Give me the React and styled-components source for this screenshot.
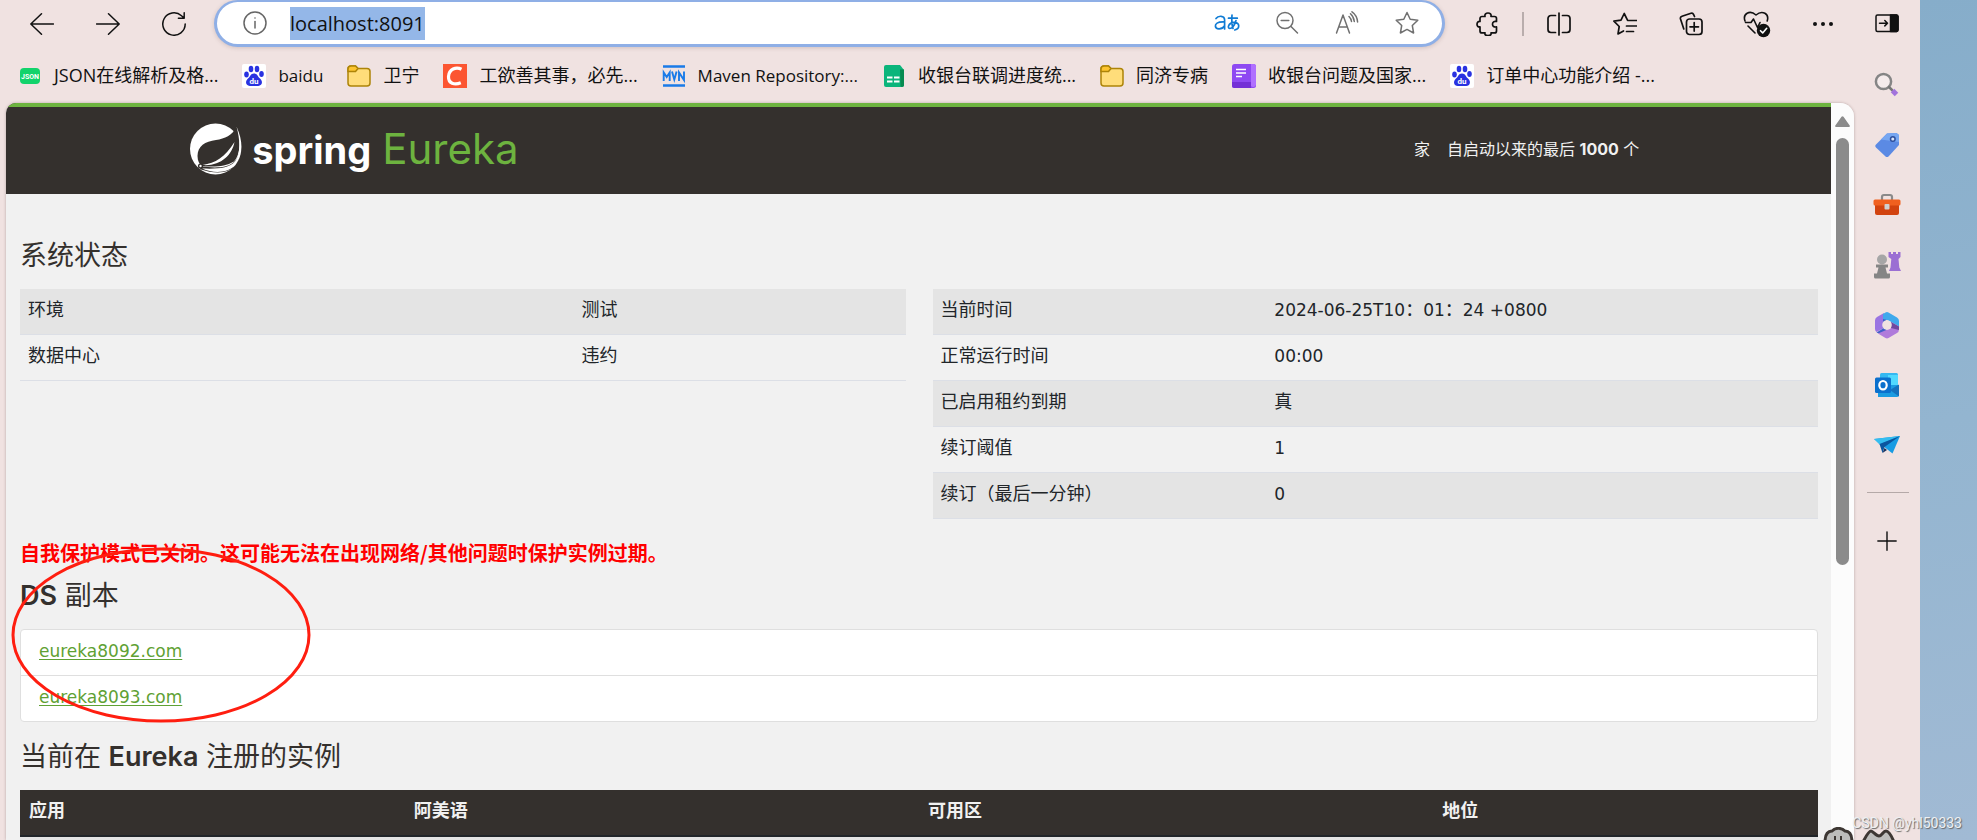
import React from "react";
import styled, { createGlobalStyle } from "styled-components";

const cjk = `"Noto Sans CJK SC", sans-serif`;

const GlobalStyle = createGlobalStyle`
  *, *::before, *::after { box-sizing: border-box; }
  body {
    margin: 0;
    background: #f0e2e1;
    color: #212529;
    font: 18px/27px "DejaVu Sans", ${cjk};
  }
  button { font: inherit; color: inherit; }
  svg { display: block; flex: none; }
`;

/* ---------- window ---------- */

const Screen = styled.div`
  position: relative;
  display: flex;
  height: 100vh;
  overflow: hidden;
`;

const Main = styled.div`
  flex: 1;
  min-width: 0;
  display: flex;
  flex-direction: column;
`;

const Desktop = styled.div`
  width: 57px;
  background: linear-gradient(170deg, #86adca, #93b5d0 50%, #a1bad4);
`;

const Toolbar = styled.div`
  display: flex;
  align-items: center;
  height: 47px;
  padding-left: 9px;
`;

const ToolButton = styled.button`
  display: flex;
  align-items: center;
  justify-content: center;
  flex: none;
  width: ${(p) => p.$width || 66}px;
  height: ${(p) => p.$height || 46}px;
  padding: 0;
  border: 0;
  background: none;
  color: ${(p) => p.$color || "#111"};
`;

const Divider = styled.span`
  width: 2px;
  height: 24px;
  margin: 0 2px 0 1px;
  background: #b9adac;
`;

const AddressBar = styled.div`
  display: flex;
  align-items: center;
  flex: 1;
  height: 47px;
  margin: 0 10px 0 7px;
  padding: 0 5px;
  border: 3px solid #8fafe6;
  border-top-width: 2px;
  border-radius: 24px;
  background: #fff;
  box-shadow: 0 1px 4px rgba(90, 60, 60, 0.2);
`;

const AddressSpace = styled.label`
  flex: 1;
  display: flex;
  padding-left: 2px;
`;

const AddressInput = styled.input`
  field-sizing: content;
  height: 33px;
  padding: 0;
  border: 0;
  outline: 0;
  background: #94b7e8;
  color: #111;
  font: 20px/33px "Open Sans", ${cjk};
`;

const Bookmarks = styled.nav`
  display: flex;
  align-items: center;
  gap: 24px;
  height: 56px;
  padding: 1px 0 0 18px;
`;

const Bookmark = styled.a`
  display: flex;
  align-items: center;
  gap: 12px;
  color: #111;
  font-family: "Open Sans", ${cjk};
  font-size: ${(p) => (p.$latin ? 17 : 18)}px;
  text-decoration: none;
  white-space: nowrap;
`;

const Sidebar = styled.aside`
  display: flex;
  flex-direction: column;
  width: 64px;
`;

const SideApps = styled.div`
  margin-top: 9px;
`;

const SideLine = styled.hr`
  width: 42px;
  height: 1px;
  margin: 17px auto 18px;
  border: 0;
  background: #b5a9a8;
`;

/* ---------- page ---------- */

const Viewport = styled.div`
  display: flex;
  flex: 1;
  min-height: 0;
  margin: 0 2px 0 6px;
  overflow: hidden;
  border-radius: 10px 14px 0 0;
  background: #f1f1f1;
  box-shadow: 0 0 3px rgba(80, 50, 50, 0.35);
`;

const Page = styled.div`
  flex: 1;
  min-width: 0;
`;

const Scrollbar = styled.div`
  display: flex;
  flex-direction: column;
  align-items: center;
  gap: 11px;
  width: 23px;
  padding-top: 13px;
  background: #fcfcfc;
`;

const Thumb = styled.div`
  width: 13px;
  height: 59%;
  border-radius: 7px;
  background: #8b8b8b;
`;

const PageHeader = styled.header`
  display: flex;
  align-items: center;
  justify-content: space-between;
  height: 91px;
  padding: 0 10.5% 3px 10.1%;
  border-top: 4px solid #6db33f;
  background: #34302d;
`;

const Brand = styled.a`
  display: flex;
  align-items: center;
  gap: 10px;
  color: #fff;
  font: 700 38px/48px Inter, sans-serif;
  text-decoration: none;
`;

const BrandText = styled.span`
  display: flex;
  align-items: baseline;
  gap: 11px;
`;

const BrandName = styled.span`
  color: #6db33f;
  font-size: 42px;
  font-weight: 400;
`;

const PageNav = styled.nav`
  display: flex;
  gap: 17px;
`;

const PageLink = styled.a`
  color: #f1f1f1;
  font: 400 16px/24px Inter, ${cjk};
  text-decoration: none;

  b { font-weight: 700; }
`;

const Content = styled.main`
  padding: 46px 13px 0 14px;
`;

const Heading = styled.h1`
  margin: 0 0 17px;
  color: #34302d;
  font: 400 27px/32px Inter, ${cjk};

  b { font-weight: 600; }
`;

const Columns = styled.div`
  display: flex;
  align-items: flex-start;
  gap: 27px;
`;

const StatusTable = styled.table`
  flex: 1;
  table-layout: fixed;
  border-spacing: 0;
  width: 0;

  th { width: ${(p) => p.$label}; font-weight: 400; text-align: left; }
`;

const StatusRow = styled.tr`
  &:nth-child(odd) { background: #e4e4e4; }

  th, td {
    height: 46px;
    padding: 7px 8px 11px;
    border-bottom: 1px solid #dcdfe6;
  }
`;

const Latin = styled.span`
  font-size: 17px;
  line-height: 20px;
`;

const Warning = styled.p`
  margin: 19px 0 12px;
  color: #f00;
  font: 700 20px/30px ${cjk};
`;

const Replicas = styled.section`
  position: relative;
  margin-bottom: 19px;
`;

const ReplicaList = styled.ul`
  margin: 0;
  padding: 0;
  border: 1px solid #dfdfdf;
  border-radius: 4px;
  background: #fff;
  list-style: none;
`;

const Replica = styled.li`
  padding: 7px 18px 11px;

  & + & { border-top: 1px solid #dfdfdf; }
  a {
    color: #5fa134;
    font-size: 17px;
    line-height: 20px;
    text-underline-offset: 2px;
  }
`;

const Marker = styled.svg`
  position: absolute;
  top: -34px;
  left: -10px;
  pointer-events: none;
`;

const InstanceTable = styled.table`
  width: 100%;
  table-layout: fixed;
  border-spacing: 0;

  th {
    width: 28.6%;
    height: 47px;
    padding: 7px 9px 11px;
    border-bottom: 2px solid #212529;
    background: #34302d;
    color: #f1f1f1;
    font-weight: 700;
    text-align: left;
  }
  th:first-child { width: 21.4%; }
  th:last-child { width: auto; }
  td { height: 46px; background: #e4e4e4; }
`;

const Watermark = styled.div`
  position: absolute;
  right: 15px;
  bottom: 7px;
  color: #eef0f2;
  font: 14px/20px Roboto, sans-serif;
  text-shadow: 1px 1px 1px #666;
`;

const Stickers = styled.svg`
  position: absolute;
  right: 78px;
  bottom: 0;
`;

/* ---------- icons ---------- */

function Icon({ size = 24, sw = 1.5, children, ...rest }) {
  return (
    <svg width={size} height={size} viewBox="0 0 24 24" fill="none" stroke="currentColor"
      strokeWidth={sw} strokeLinecap="round" strokeLinejoin="round" aria-hidden="true" {...rest}>
      {children}
    </svg>
  );
}

const star = "M12 1.5 15.2 8.2 22.8 9.2 17.3 14.5 18.6 22 12 18.4 5.4 22 6.7 14.5 1.2 9.2 8.8 8.2Z";

const BackIcon = () => <Icon><path d="M23.5 12H.8M11.5 1.8.8 12l10.7 10.2" /></Icon>;
const ForwardIcon = () => <Icon><path d="M.5 12h22.7M12.5 1.8 23.2 12 12.5 22.2" /></Icon>;
const ReloadIcon = () => (
  <Icon><path d="M23.2 12A11.2 11.2 0 1 1 19.5 3.7L22 6M22.2.8V6.2H16.4" /></Icon>
);
const InfoIcon = () => (
  <Icon><circle cx="12" cy="12" r="11" /><path d="M12 10.5v6.5" />
    <circle cx="12" cy="7" r=".8" fill="currentColor" stroke="none" /></Icon>
);
const TranslateIcon = () => (
  <svg width="26" height="24" viewBox="0 0 26 24" fill="none" stroke="currentColor" strokeWidth="1.7"
    strokeLinecap="round" aria-hidden="true">
    <path d="M2 7.5C4 4.6 10.6 4 10.6 9v9M10.6 11C3 10.6 1.2 13 1.4 15.2c.3 3.6 6.600 3.700 9.200-.5" />
    <path d="M14.500 7.200h8.800M18 4c-.5 6-.3 9.500 1 13.500M22 9.500c-1.400 4.600-3.600 8-6.300 8-2.700-.4-1.200-6 4.300-6.200 6.300.2 6 6.500.8 7.700" />
  </svg>
);
const ZoomOutIcon = () => (
  <Icon><circle cx="10" cy="9.500" r="8" /><path d="M6.200 9.500h7.600M16 15.500l6.500 6.500" /></Icon>
);
const ReadIcon = () => (
  <Icon><path d="M1.500 22 8 4 14.500 22M4 16h8M14 5.500c1.500 1.500 2.300 3 2.500 5M15.500 2.800c2.200 2 3.500 4.700 3.800 7.700M17 .8c3.300 2.300 5.300 6 5.600 10.200" /></Icon>
);
const StarIcon = () => <Icon><path d={star} /></Icon>;
const PuzzleIcon = () => (
  <Icon sw={1.700}><path d="M4 6.500a2 2 0 0 1 2-2h3c-.5-2.500 1-3.500 3-3.500s3.500 1 3 3.500h3.500a2 2 0 0 1 2 2v3c-2.500-.5-4 .7-4 2.700s1.500 3.200 4 2.700v4a2 2 0 0 1-2 2H15c.5 2-1 2.600-3 2.600s-3.500-.6-3-2.600H6a2 2 0 0 1-2-2v-4c-2 .3-3-1-3-2.700s1-3 3-2.700Z" /></Icon>
);
const SplitIcon = () => (
  <Icon sw={1.700}><path d="M12 1v22M8.500 3.500H4a3 3 0 0 0-3 3v11a3 3 0 0 0 3 3h4.500M15.500 3.500H20a3 3 0 0 1 3 3v11a3 3 0 0 1-3 3h-4.500" /></Icon>
);
const FavoritesIcon = () => (
  <Icon sw={1.700}><path d="M14.500 8.200 11.200 1.500 8 8.200 .9 9.200 6.200 14.500 5 22l5.500-3M15 8.500h8.500M13.500 14h10M13.500 19.500h7" /></Icon>
);
const CollectionsIcon = () => (
  <Icon sw={1.700}><rect x="7.500" y="7" width="15.500" height="15.500" rx="3" /><path d="M15.200 10.500v8.600M11 14.800h8.500M15.500 4.500 14.500 2.300A2 2 0 0 0 12 1.200L3 4.200A2.300 2.300 0 0 0 1.500 7L4.800 17" /></Icon>
);
const HealthIcon = () => (
  <Icon size={28} sw={1.600} viewBox="0 0 28 28">
    <path d="M2 11C-.5 4 6.500-.5 13 5c6.500-5.500 13.500-1 11.200 6M2.500 12.500H8L10.500 9l4 8.500 2.500-5M5 16l7 7" />
    <circle cx="20.500" cy="20.500" r="6.700" fill="currentColor" stroke="none" />
    <path d="m17.500 20.700 2.200 2.200 4-4.600" stroke="#fff" />
  </Icon>
);
const MoreIcon = () => (
  <Icon stroke="none"><g fill="currentColor"><circle cx="4" cy="12" r="2" /><circle cx="12" cy="12" r="2" /><circle cx="20" cy="12" r="2" /></g></Icon>
);
const PanelIcon = () => (
  <Icon><rect x="1" y="4" width="22" height="16.500" rx="1.500" /><path d="M15.500 4H21.500L23 5.500V19l-1.500 1.500h-6Z" fill="currentColor" /><path d="M4.500 12.200h8M9.800 9.500l2.700 2.700-2.700 2.700" /></Icon>
);

const JsonMark = () => (
  <svg width="24" height="24" viewBox="0 0 24 24" aria-hidden="true">
    <rect x="2" y="4" width="20" height="16" rx="4" fill="#12d36b" />
    <text x="12" y="14.500" textAnchor="middle" fill="#fff" fontFamily="Roboto" fontSize="7" fontWeight="700">JSON</text>
  </svg>
);
const BaiduMark = () => (
  <svg width="24" height="24" viewBox="0 0 24 24" aria-hidden="true">
    <rect width="24" height="24" rx="2" fill="#fff" />
    <g fill="#2932e1">
      <ellipse cx="4.500" cy="10.500" rx="2.300" ry="3" /><ellipse cx="9" cy="5" rx="2.300" ry="3.200" />
      <ellipse cx="15" cy="5" rx="2.300" ry="3.200" /><ellipse cx="19.500" cy="10" rx="2.300" ry="3" />
      <path d="M12 9.500c3.500 0 3.500 3 6 5 3.500 3 2 7.700-2 7.500H8c-4 .2-5.500-4.500-2-7.500 2.500-2 2.500-5 6-5Z" />
    </g>
    <text x="12" y="20" textAnchor="middle" fill="#fff" fontFamily="Roboto" fontSize="8" fontWeight="700">du</text>
  </svg>
);
const FolderMark = () => (
  <svg width="24" height="24" viewBox="0 0 24 24" fill="#ffdd7a" stroke="#ad8408" strokeWidth="1.500" aria-hidden="true">
    <path d="M1 5a3 3 0 0 1 3-3h4.500L11 4.500H20a3 3 0 0 1 3 3V19a3 3 0 0 1-3 3H4a3 3 0 0 1-3-3Z" />
    <path d="M1 7.500V5a3 3 0 0 1 3-3h4.500L11 4.500 8.500 7.500Z" fill="#fdc42f" />
  </svg>
);
const CsdnMark = () => (
  <svg width="24" height="24" viewBox="0 0 24 24" aria-hidden="true">
    <rect width="24" height="24" fill="#fc5531" />
    <path d="M18.500 5.200C13 2.500 6 5 5.500 12.500c-.3 7 6 8.700 12.300 6.300" fill="none" stroke="#fff" strokeWidth="3.200" />
  </svg>
);
const MvnMark = () => (
  <svg width="24" height="24" viewBox="0 0 24 24" fill="none" stroke="#1a7be8" aria-hidden="true">
    <path d="M1 2.500h22M1 21.500h22" strokeWidth="2.500" />
    <path d="M1.700 17V8.500L4.700 13l3-4.500V17M10 7.500l2.300 8 2.300-8M17 17V8.500l5 7.500V7.500" strokeWidth="1.900" />
  </svg>
);
const SheetMark = () => (
  <svg width="24" height="24" viewBox="0 0 24 24" aria-hidden="true">
    <path d="M4 1h14l4 5v15a2 2 0 0 1-2 2H4a2 2 0 0 1-2-2V3a2 2 0 0 1 2-2Z" fill="#0bb57b" />
    <path d="M18 5.500h4V21a2 2 0 0 1-3.500 1.300Z" fill="#078a50" />
    <path d="M5 13.500h5.500M12 13.500h5.500M5 17.500h5.500M12 17.500h5.500" stroke="#fff" strokeWidth="2" />
  </svg>
);
const DocMark = () => (
  <svg width="24" height="24" viewBox="0 0 24 24" aria-hidden="true">
    <rect width="24" height="24" rx="2.500" fill="#8e49f2" />
    <path d="M19 0h2.500A2.500 2.500 0 0 1 24 2.500V21a3 3 0 0 1-5 1Z" fill="#b070ff" />
    <path d="M0 18h19v6H2.500A2.500 2.500 0 0 1 0 21.500Z" fill="#7430d6" />
    <path d="M4 5.500h10M4 9h10M4 12.500h6" stroke="#fff" strokeWidth="1.700" />
  </svg>
);

const SpringMark = () => (
  <svg width="52" height="52" viewBox="0 0 52 52" aria-hidden="true">
    <circle cx="25.500" cy="26" r="25.500" fill="#fff" />
    <path d="M46.500 3.500C42 13 35 15.500 26 17 15 18.500 7.500 23 7.500 33c0 5 2 8 4.500 10.200C25 43.800 35 44 44 38.500 49.500 33 52 19 46.500 3.500Z" fill="#34302d" />
    <path d="M46.500 3.500C52 18 51.500 31 45 38c-7 7.500-19 7-34.500 5.600l-.5 2.600C25 51 38 51 45.500 42.500 53.500 32 52.500 16 46.500 3.500Z" fill="#34302d" />
    <path d="M46.500 3.500C53.500 19 53 32 45.500 42 38 50 24 51 12 45.500 27 46 39 45.500 45 38.500 50.500 31 50.500 18 46.500 3.500Z" fill="#fff" />
    <path d="M44.500 19C42 32.500 30 43.500 12.500 42c13-2 22.500-7.500 32-23Z" fill="#fff" />
    <circle cx="10.500" cy="43" r="2.600" fill="#34302d" />
    <circle cx="10.500" cy="43" r="1.200" fill="#fff" />
  </svg>
);

const SearchApp = () => (
  <Icon size={28} viewBox="0 0 28 28">
    <circle cx="10.500" cy="10.500" r="7.600" stroke="#858585" strokeWidth="2.500" fill="#f5ecec" />
    <path d="m16 16 3 3" stroke="#777" strokeWidth="2.500" />
    <path d="m19.500 19.500 4 4" stroke="#a273dc" strokeWidth="5" strokeLinecap="butt" />
  </Icon>
);
const TagApp = () => (
  <svg width="26" height="26" viewBox="0 0 26 26" aria-hidden="true">
    <path d="M13 1.500 22.500 1 25 3v10L14.500 24.500c-1 .8-2 .8-3 0l-9.500-9c-1-1-1-2 0-3Z" fill="#5b8ae4" />
    <path d="M13 1.500 22.500 1 25 3v7L7 7.500Z" fill="#76a6f1" />
    <circle cx="18.800" cy="7" r="2.300" fill="#d9e4fa" stroke="#2d4f9d" strokeWidth="1.500" />
  </svg>
);
const ToolboxApp = () => (
  <svg width="28" height="24" viewBox="0 0 28 24" aria-hidden="true">
    <path d="M9 7V4a2 2 0 0 1 2-2h6a2 2 0 0 1 2 2v3" fill="none" stroke="#8a8a8a" strokeWidth="2.200" />
    <rect x="2" y="8" width="24" height="14" rx="2" fill="#d2430f" />
    <rect x=".5" y="6.500" width="27" height="6" rx="1.500" fill="#f0601f" />
    <rect x="11.500" y="11" width="5" height="5.500" rx="1" fill="#d0d0d0" />
  </svg>
);
const GamesApp = () => (
  <svg width="28" height="28" viewBox="0 0 28 28" aria-hidden="true">
    <path d="M15.500 1h2.500v2h2V1h3v2h2V1h2.500v5l-2 2 .8 8.500 1.700 3.500h-12l1.500-3.500.8-8.500-2.800-2Z" fill="#9b6fd3" />
    <circle cx="9" cy="8.500" r="5" fill="#a6a6a6" />
    <path d="M3 13.500h12v3h-2.500l1.500 6h3v3.500a1.500 1.500 0 0 1-1.500 1.500h-13A1.500 1.500 0 0 1 1 26v-3.500h3l1.500-6H3Z" fill="#858585" />
  </svg>
);
const OfficeApp = () => (
  <svg width="26" height="28" viewBox="0 0 26 28" aria-hidden="true">
    <path d="M10 2 3 6a4 4 0 0 0-2 3.500V18a4 4 0 0 0 1.500 3l6.500-3.500V10Z" fill="#9a74e2" />
    <path d="M9 3v14.500L2.500 21.500 6 23l7-3.500L9 14l4-6Z" fill="#3f5fc8" />
    <path d="M9 8V3l2.500-1.500a3 3 0 0 1 3 0L23 6.500A4 4 0 0 1 25 10v5.500L17 11l-4-2Z" fill="#3fa9ec" />
    <path d="m25 15.500-8-4.500v6L4 22.500l7.500 4.500a3 3 0 0 0 3 0l8.500-5a4 4 0 0 0 2-3.500Z" fill="#b07bdb" />
    <path d="m25 15.500-8-4.500v6l8 2Z" fill="#70489f" />
    <circle cx="13" cy="14" r="4.800" fill="#f0e2e1" />
  </svg>
);
const OutlookApp = () => (
  <svg width="26" height="26" viewBox="0 0 26 26" aria-hidden="true">
    <rect x="6" y="1" width="18" height="16" rx="1.500" fill="#35b8f1" />
    <path d="M14 3h10v10H14Z" fill="#50d9ff" />
    <path d="M4 13h21v10a2 2 0 0 1-2 2H4Z" fill="#1a9be1" />
    <path d="M25 12.500 16 18l9 6.500Z" fill="#1371bd" />
    <rect x="1" y="5.500" width="16" height="15.500" rx="1.500" fill="#0b70cd" />
    <ellipse cx="9" cy="13.200" rx="3.700" ry="4.200" fill="none" stroke="#fff" strokeWidth="2.200" />
  </svg>
);
const SendApp = () => (
  <svg width="26" height="20" viewBox="0 0 26 20" aria-hidden="true">
    <path d="M0 4 26 1 18.500 18.500Z" fill="#179be3" />
    <path d="M0 4 26 1 5.500 9.500Z" fill="#35bdf0" />
    <path d="M5.500 9 26 1 10.500 12 8.500 18Z" fill="#0b559f" />
    <path d="m8.500 18 2-5 2.500 2Z" fill="#17305d" />
  </svg>
);
const PlusIcon = () => <Icon size={20} sw={1.700}><path d="M12 1v22M1 12h22" /></Icon>;

/* ---------- data ---------- */

const bookmarks = [
  [JsonMark, "JSON在线解析及格..."],
  [BaiduMark, "baidu", true],
  [FolderMark, "卫宁"],
  [CsdnMark, "工欲善其事，必先..."],
  [MvnMark, "Maven Repository:...", true],
  [SheetMark, "收银台联调进度统..."],
  [FolderMark, "同济专病"],
  [DocMark, "收银台问题及国家..."],
  [BaiduMark, "订单中心功能介绍 -..."],
];

const navTools = [["后退", BackIcon], ["前进", ForwardIcon], ["刷新", ReloadIcon]];
const addressTools = [
  ["翻译", TranslateIcon, "#0f7bd4"],
  ["缩小", ZoomOutIcon, "#707070"],
  ["朗读", ReadIcon, "#707070"],
  ["收藏", StarIcon, "#707070"],
];
const windowTools = [
  ["拆分屏幕", SplitIcon], ["收藏夹", FavoritesIcon], ["集锦", CollectionsIcon],
  ["浏览器概要", HealthIcon], ["更多", MoreIcon],
];
const sideApps = [
  ["搜索", SearchApp], ["购物", TagApp], ["工具", ToolboxApp], ["游戏", GamesApp],
  ["Microsoft 365", OfficeApp], ["Outlook", OutlookApp], ["发送", SendApp],
];

const environment = [["环境", "测试"], ["数据中心", "违约"]];
const runtime = [
  ["当前时间", <><Latin>2024-06-25T10</Latin>：<Latin>01</Latin>：<Latin>24 +0800</Latin></>],
  ["正常运行时间", <Latin>00:00</Latin>],
  ["已启用租约到期", "真"],
  ["续订阈值", <Latin>1</Latin>],
  ["续订（最后一分钟）", <Latin>0</Latin>],
];

function Status({ rows, label }) {
  return (
    <StatusTable $label={label}>
      <tbody>
        {rows.map(([name, value]) => (
          <StatusRow key={name}><th scope="row">{name}</th><td>{value}</td></StatusRow>
        ))}
      </tbody>
    </StatusTable>
  );
}

export default function App() {
  return (
    <Screen>
      <GlobalStyle />
      <Main>
        <Toolbar>
          {navTools.map(([name, Glyph]) => (
            <ToolButton key={name} aria-label={name}><Glyph /></ToolButton>
          ))}
          <AddressBar>
            <ToolButton aria-label="网站信息" $height={40} $color="#666"><InfoIcon /></ToolButton>
            <AddressSpace><AddressInput aria-label="地址" defaultValue="localhost:8091" /></AddressSpace>
            {addressTools.map(([name, Glyph, color]) => (
              <ToolButton key={name} aria-label={name} $width={60} $height={40} $color={color}><Glyph /></ToolButton>
            ))}
          </AddressBar>
          <ToolButton aria-label="扩展"><PuzzleIcon /></ToolButton>
          <Divider />
          {windowTools.map(([name, Glyph]) => (
            <ToolButton key={name} aria-label={name}><Glyph /></ToolButton>
          ))}
        </Toolbar>
        <Bookmarks>
          {bookmarks.map(([Mark, text, latin]) => (
            <Bookmark key={text} href="#" $latin={latin}><Mark />{text}</Bookmark>
          ))}
        </Bookmarks>
        <Viewport>
          <Page>
            <PageHeader>
              <Brand href="#">
                <SpringMark />
                <BrandText>spring <BrandName>Eureka</BrandName></BrandText>
              </Brand>
              <PageNav>
                <PageLink href="#">家</PageLink>
                <PageLink href="#">自启动以来的最后 <b>1000</b> 个</PageLink>
              </PageNav>
            </PageHeader>
            <Content>
              <Heading>系统状态</Heading>
              <Columns>
                <Status rows={environment} label="62.5%" />
                <Status rows={runtime} label="37.7%" />
              </Columns>
              <Warning>自我保护模式已关闭。这可能无法在出现网络/其他问题时保护实例过期。</Warning>
              <Replicas>
                <Heading><b>DS</b> 副本</Heading>
                <ReplicaList>
                  <Replica><a href="#">eureka8092.com</a></Replica>
                  <Replica><a href="#">eureka8093.com</a></Replica>
                </ReplicaList>
                <Marker width="302" height="178" viewBox="0 0 302 178" aria-hidden="true">
                  <ellipse cx="151" cy="89" rx="148" ry="86" fill="none" stroke="#ff1e10" strokeWidth="3" />
                </Marker>
              </Replicas>
              <Heading>当前在 <b>Eureka</b> 注册的实例</Heading>
              <InstanceTable>
                <thead>
                  <tr><th>应用</th><th>阿美语</th><th>可用区</th><th>地位</th></tr>
                </thead>
                <tbody><tr><td /><td /><td /><td /></tr></tbody>
              </InstanceTable>
            </Content>
          </Page>
          <Scrollbar>
            <svg width="15" height="11" viewBox="0 0 15 11" aria-hidden="true">
              <path d="M6.500.8a1.300 1.300 0 0 1 2 0l6 8.500a1 1 0 0 1-.8 1.700H1.300a1 1 0 0 1-.8-1.700Z" fill="#8b8b8b" />
            </svg>
            <Thumb />
          </Scrollbar>
        </Viewport>
      </Main>
      <Sidebar>
        <ToolButton aria-label="边栏" $width={62}><PanelIcon /></ToolButton>
        <SideApps>
          {sideApps.map(([name, Glyph]) => (
            <ToolButton key={name} aria-label={name} $width={62} $height={60}><Glyph /></ToolButton>
          ))}
        </SideApps>
        <SideLine />
        <ToolButton aria-label="添加" $width={62} $height={60}><PlusIcon /></ToolButton>
      </Sidebar>
      <Desktop />
      <Stickers width="76" height="13" viewBox="0 0 76 13" aria-hidden="true">
        <g fill="#bdbdbb" stroke="#3d3733" strokeWidth="3">
          <path d="M2 15C2 7 5 4 9 4c4-4 10-3 13 0 5 0 7 5 7 11Z" />
          <path d="M40 15c3-6 6-11 8-11s5 5 8 5c3 0 4-5 7-5s6 6 8 11Z" />
          <path d="M12 14V9M18 14V9" strokeWidth="2" />
        </g>
      </Stickers>
      <Watermark>CSDN @yhl50333</Watermark>
    </Screen>
  );
}
